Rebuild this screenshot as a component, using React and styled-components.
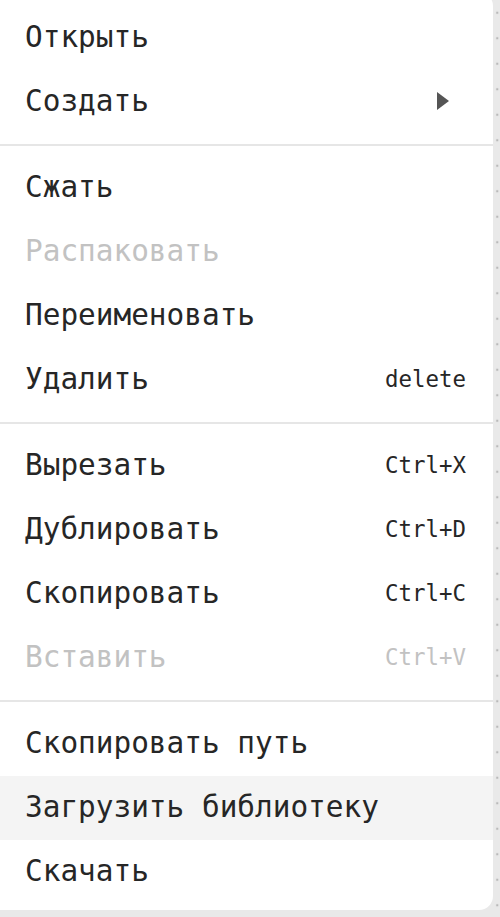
import React from 'react';
import styled, { createGlobalStyle } from 'styled-components';

const GlobalStyle = createGlobalStyle`
  html, body {
    margin: 0;
    padding: 0;
  }

  body {
    background-color: #e9e9e9;
    background-image: radial-gradient(circle, #b9b9b9 1px, transparent 1.6px);
    background-size: 25.5px 25.5px;
    font-family: "DejaVu Sans Mono", monospace;
    height: 917px;
    overflow: hidden;
  }
`

const Page = styled.div`
  display: flex;
  align-items: flex-start;
`

const Menu = styled.ul`
  list-style: none;
  margin: -8px 0 0 0;
  padding: 14px 0 6px;
  width: 493px;
  background: #ffffff;
  border-radius: 0 14px 14px 0;
  box-sizing: border-box;
`

const Item = styled.li`
  display: flex;
  align-items: center;
  justify-content: space-between;
  height: 64px;
  padding: 0 27px 2px 25px;
  box-sizing: border-box;
  background: ${({ $active }) => ($active ? '#f4f4f4' : 'transparent')};
  color: ${({ $disabled }) => ($disabled ? '#c2c2c2' : '#262626')};
  cursor: ${({ $disabled }) => ($disabled ? 'default' : 'pointer')};
`

const Label = styled.span`
  font-size: 29.4px;
  white-space: pre;
`

const Shortcut = styled.span`
  font-size: 22.4px;
  color: ${({ $disabled }) => ($disabled ? '#c2c2c2' : '#262626')};
`

const Arrow = styled.svg`
  width: 12px;
  height: 18px;
  margin-right: 17px;
  fill: #555555;
`

const Separator = styled.li`
  height: 2px;
  margin: 10px 0;
  background: #e6e6e6;
`

const groups = [
  [
    { label: 'Открыть' },
    { label: 'Создать', submenu: true },
  ],
  [
    { label: 'Сжать' },
    { label: 'Распаковать', disabled: true },
    { label: 'Переименовать' },
    { label: 'Удалить', shortcut: 'delete' },
  ],
  [
    { label: 'Вырезать', shortcut: 'Ctrl+X' },
    { label: 'Дублировать', shortcut: 'Ctrl+D' },
    { label: 'Скопировать', shortcut: 'Ctrl+C' },
    { label: 'Вставить', shortcut: 'Ctrl+V', disabled: true },
  ],
  [
    { label: 'Скопировать путь' },
    { label: 'Загрузить библиотеку', active: true },
    { label: 'Скачать' },
  ],
];

function App() {
  return (
    <Page>
      <GlobalStyle />
      <Menu>
        {groups.map((group, gi) => (
          <React.Fragment key={gi}>
            {gi > 0 && <Separator />}
            {group.map((item) => (
              <Item key={item.label} $disabled={item.disabled} $active={item.active}>
                <Label>{item.label}</Label>
                {item.shortcut && <Shortcut $disabled={item.disabled}>{item.shortcut}</Shortcut>}
                {item.submenu && (
                  <Arrow viewBox="0 0 12 18">
                    <path d="M0 0 L12 9 L0 18 Z" />
                  </Arrow>
                )}
              </Item>
            ))}
          </React.Fragment>
        ))}
      </Menu>
    </Page>
  );
}

export default App;
